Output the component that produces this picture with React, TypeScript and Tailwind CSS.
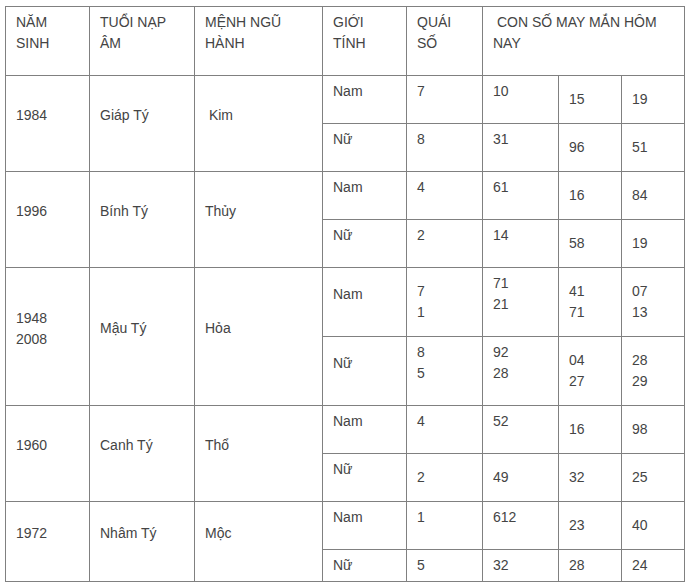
import React from "react"

type Cell = { t: string[]; p?: boolean }

interface Group {
    year: string[]
    tuoi: string
    menh: string
    rows: Cell[][]
}

const c = (p: boolean, ...t: string[]): Cell => ({ t, p })

const groups: Group[] = [
    {
        year: ["1984"],
        tuoi: "Giáp Tý",
        menh: "\u00a0Kim",
        rows: [
            [c(true, "Nam"), c(true, "7"), c(true, "10"), c(false, "15"), c(false, "19")],
            [c(true, "Nữ"), c(true, "8"), c(true, "31"), c(false, "96"), c(false, "51")],
        ],
    },
    {
        year: ["1996"],
        tuoi: "Bính Tý",
        menh: "Thủy",
        rows: [
            [c(true, "Nam"), c(true, "4"), c(true, "61"), c(false, "16"), c(false, "84")],
            [c(true, "Nữ"), c(true, "2"), c(true, "14"), c(false, "58"), c(false, "19")],
        ],
    },
    {
        year: ["1948", "2008"],
        tuoi: "Mậu Tý",
        menh: "Hỏa",
        rows: [
            [c(true, "Nam"), c(false, "7", "1"), c(true, "71", "21"), c(false, "41", "71"), c(false, "07", "13")],
            [c(true, "Nữ"), c(true, "8", "5"), c(true, "92", "28"), c(false, "04", "27"), c(false, "28", "29")],
        ],
    },
    {
        year: ["1960"],
        tuoi: "Canh Tý",
        menh: "Thổ",
        rows: [
            [c(true, "Nam"), c(true, "4"), c(true, "52"), c(false, "16"), c(false, "98")],
            [c(true, "Nữ"), c(false, "2"), c(false, "49"), c(false, "32"), c(false, "25")],
        ],
    },
    {
        year: ["1972"],
        tuoi: "Nhâm Tý",
        menh: "Mộc",
        rows: [
            [c(true, "Nam"), c(true, "1"), c(true, "612"), c(false, "23"), c(false, "40")],
            [c(false, "Nữ"), c(false, "5"), c(false, "32"), c(false, "28"), c(false, "24")],
        ],
    },
]

const td = "border border-[#808080] px-[10px] py-[5px] align-middle"

function Content({ cell }: { cell: Cell }) {
    const lines = cell.t.map((line, i) => (
        <React.Fragment key={i}>
            {i > 0 && <br />}
            {line}
        </React.Fragment>
    ))
    return cell.p ? <p className="mb-4">{lines}</p> : <>{lines}</>
}

export default function App() {
    return (
        <div className="min-h-[584px] bg-white pl-[5px] pt-[6px] font-['Liberation_Sans',Arial,sans-serif] text-[14px] leading-[21px] text-[#444]">
            <table className="w-[680px] table-fixed border-collapse">
                <colgroup>
                    <col className="w-[84px]" />
                    <col className="w-[105px]" />
                    <col className="w-[128px]" />
                    <col className="w-[84px]" />
                    <col className="w-[76px]" />
                    <col className="w-[76px]" />
                    <col className="w-[63px]" />
                    <col className="w-[63px]" />
                </colgroup>
                <tbody>
                    <tr>
                        <td className={td}>
                            <p className="mb-4">NĂM<br />SINH</p>
                        </td>
                        <td className={td}>
                            <p className="mb-4">TUỔI NẠP<br />ÂM</p>
                        </td>
                        <td className={td}>
                            <p className="mb-4">MỆNH NGŨ<br />HÀNH</p>
                        </td>
                        <td className={td}>
                            <p className="mb-4">GIỚI<br />TÍNH</p>
                        </td>
                        <td className={td}>
                            <p className="mb-4">QUÁI<br />SỐ</p>
                        </td>
                        <td className={td} colSpan={3}>
                            <p className="mb-4">{"\u00a0CON SỐ MAY MẮN HÔM"}<br />NAY</p>
                        </td>
                    </tr>
                    {groups.map((g) =>
                        g.rows.map((row, ri) => (
                            <tr key={g.year[0] + ri}>
                                {ri === 0 && (
                                    <>
                                        <td className={td} rowSpan={2}>
                                            <Content cell={{ t: g.year, p: true }} />
                                        </td>
                                        <td className={td} rowSpan={2}>
                                            <Content cell={{ t: [g.tuoi], p: true }} />
                                        </td>
                                        <td className={td} rowSpan={2}>
                                            <Content cell={{ t: [g.menh], p: true }} />
                                        </td>
                                    </>
                                )}
                                {row.map((cell, ci) => (
                                    <td key={ci} className={td}>
                                        <Content cell={cell} />
                                    </td>
                                ))}
                            </tr>
                        ))
                    )}
                </tbody>
            </table>
        </div>
    )
}
